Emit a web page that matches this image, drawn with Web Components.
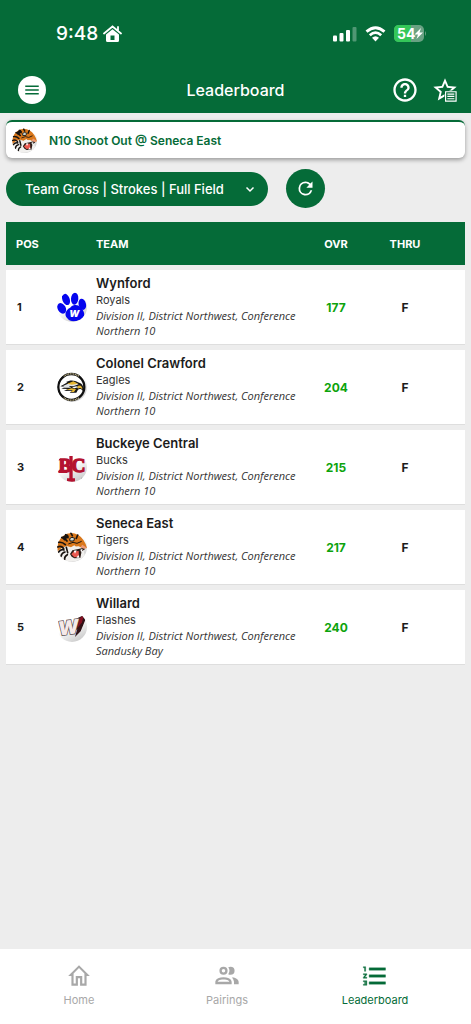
<!DOCTYPE html>
<html lang="en">
<head>
<meta charset="utf-8">
<meta name="viewport" content="width=device-width, initial-scale=1">
<title>Leaderboard</title>
<style>
	:root {
		--brand: #056b38;
		--page: #ededed;
	}

	body {
		margin: 0;
		background: var(--page);
		color: #1c1c1c;
		font-family: Inter, 'Liberation Sans', sans-serif;
	}
</style>
</head>
<body>
<golf-app></golf-app>

<script>
const define = (name, html, setup) => {
	const template = document.createElement('template');
	template.innerHTML = html;

	customElements.define(name, class extends HTMLElement {
		constructor() {
			super();
			this.attachShadow({mode: 'open'}).appendChild(template.content.cloneNode(true));
		}

		connectedCallback() {
			if (setup) {
				setup(this, this.shadowRoot);
			}
		}
	});
};

const TEAMS = [
	{pos: 1, name: 'Wynford', mascot: 'Royals', conference: 'Northern 10', score: 177, logo: 'paw'},
	{pos: 2, name: 'Colonel Crawford', mascot: 'Eagles', conference: 'Northern 10', score: 204, logo: 'eagle'},
	{pos: 3, name: 'Buckeye Central', mascot: 'Bucks', conference: 'Northern 10', score: 215, logo: 'bucks'},
	{pos: 4, name: 'Seneca East', mascot: 'Tigers', conference: 'Northern 10', score: 217, logo: 'tiger'},
	{pos: 5, name: 'Willard', mascot: 'Flashes', conference: 'Sandusky Bay', score: 240, logo: 'flash'}
];

const LOGOS = {
	paw: `
		<g fill="#0505ee">
			<ellipse cx="14" cy="49" rx="12" ry="17" transform="rotate(-30 14 49)"/>
			<ellipse cx="27" cy="22" rx="11" ry="18" transform="rotate(-22 27 22)"/>
			<ellipse cx="53" cy="20" rx="11" ry="18" transform="rotate(4 53 20)"/>
			<ellipse cx="76" cy="37" rx="11" ry="17" transform="rotate(-14 76 37)"/>
			<path d="M50 40C64 36 74 46 80 59C85 72 77 83 65 85C52 90 36 88 31 79C20 68 27 54 38 48C43 45 44 41 50 40Z"/>
		</g>
		<text x="52" y="75" text-anchor="middle" font-size="28" font-weight="900" font-style="italic" fill="#fff">W</text>`,
	eagle: `
		<circle cx="43" cy="45" r="39" fill="#fff" stroke="#101010" stroke-width="7"/>
		<path d="M20 13A39 39 0 0 1 66 13M20 77A39 39 0 0 0 66 77" fill="none" stroke="#d8cc9c" stroke-width="4" stroke-dasharray="3 2"/>
		<path d="M10 43C18 38 25 34 31 32L27 30C39 23 53 24 63 31C74 34 82 42 78 57C73 50 67 50 63 53L58 62L38 62L45 56L21 57L33 51L13 50L25 45Z" fill="#161616"/>
		<path d="M18 42L38 33L56 32L65 37L49 43L35 42L43 47L23 47Z" fill="#e1e3e5"/>
		<path d="M31 35L49 28L63 35L44 38ZM27 54L43 49L57 51L51 60L41 60L47 54ZM60 44C68 36 77 43 76 52C70 46 66 48 63 50Z" fill="#e5b530"/>
		<path d="M45 46L58 43L63 46L52 49Z" fill="#fff"/>`,
	bucks: `
		<path d="M42 12V86M30 84H54M6 58H30" stroke="#b41230" stroke-width="10" fill="none"/>
		<text x="45" y="60" font-family="'Liberation Serif', serif" font-weight="700" font-size="58" text-anchor="middle" fill="#b41230" stroke="#b41230" stroke-width="4">BC</text>
		<path d="M72 79H77" stroke="#777" stroke-width="3"/>`,
	tiger: `
		<path d="M2 60Q-2 30 17 13Q39-5 64 9Q82 20 90 48L80 50L65 43L48 44L35 50L22 50Z" fill="#d9781c"/>
		<path d="M2 58L14 48L29 42L42 46L52 40L60 48L78 50L84 72Q62 93 30 88Q8 80 2 58Z" fill="#f1f0ee"/>
		<g fill="none" stroke="#171310" stroke-width="5" stroke-linecap="round">
			<path d="M14 16Q24 18 30 27M26 8L33 17M42 4L46 11M62 9L58 19M5 31Q16 29 25 38M2 45Q12 40 20 49M5 60Q12 50 21 54M12 73Q14 62 24 60M23 82Q22 73 31 68M32 62L28 46"/>
		</g>
		<path d="M14 16L30 6L36 13L22 26Z" fill="#171310"/>
		<path d="M38 20Q44 12 53 19L50 27L39 27Z" fill="#cdd9d5" stroke="#171310" stroke-width="3"/>
		<path d="M34 36L48 31L60 34L74 28" fill="none" stroke="#171310" stroke-width="3"/>
		<path d="M39 66L46 55L64 51L80 47L84 52L74 58L70 78L52 79L44 74Z" fill="#2c1d18"/>
		<path d="M43 67L51 58L65 57L66 74L52 76Z" fill="#ea5950"/>
		<path d="M50 56L54 65L59 55ZM70 53L73 62L77 50ZM58 77L64 69L68 77Z" fill="#fff"/>
		<path d="M76 38L89 47L80 50L71 45Z" fill="#ec9a7a"/>`,
	flash: `
		<path d="M62 18L83 8L87 19L71 58L54 75L61 50L54 58Z" fill="#301217"/>
		<path d="M66 20L81 8L75 31L61 49Z" fill="#861022"/>
		<text x="34" y="67" text-anchor="middle" font-size="58" font-weight="900" font-style="italic" fill="#f5e9e9" stroke="#55474a" stroke-width="4" paint-order="stroke" transform="rotate(-8 34 45)">W</text>`
};

const ICONS = {
	menu: '<path d="M3 6h18v2H3zM3 11h18v2H3zM3 16h18v2H3z"/>',
	help: '<path d="M11 18h2v-2h-2v2zm1-16C6.48 2 2 6.48 2 12s4.48 10 10 10 10-4.48 10-10S17.52 2 12 2zm0 18c-4.41 0-8-3.59-8-8s3.59-8 8-8 8 3.59 8 8-3.59 8-8 8zm0-14c-2.21 0-4 1.79-4 4h2c0-1.1.9-2 2-2s2 .9 2 2c0 2-3 1.75-3 5h2c0-2.25 3-2.5 3-5 0-2.21-1.79-4-4-4z"/>',
	favorites: '<path d="M22 9.240l-7.190-.620L12 2 9.190 8.630 2 9.240l5.460 4.730L5.820 21 12 17.270 18.180 21l-1.630-7.030L22 9.240zM12 15.400l-3.760 2.270 1-4.280-3.320-2.880 4.380-.380L12 6.100l1.710 4.040 4.380.380-3.320 2.880 1 4.280L12 15.400z"/><path d="M11.500 12.500h11v10h-11z" fill="var(--brand)"/><path d="M12.500 13.500h9v8h-9z" fill="none" stroke="currentColor"/><path d="M14 15h6v1h-6zM14 17h6v1h-6zM14 19h6v1h-6z"/>',
	chevron: '<path d="M5 9l7 7 7-7" fill="none" stroke="currentColor" stroke-width="3"/>',
	refresh: '<path d="M17.650 6.350A7.950 7.950 0 0 0 12 4a8 8 0 1 0 7.730 10h-2.080A6 6 0 1 1 12 6c1.660 0 3.140.69 4.220 1.780L13 11h7V4l-2.350 2.350z"/>',
	home: '<path d="M12 2L2 12h3v9h6v-7h2v7h6v-9h3L12 2zm0 2.700l5 5V19h-2v-7H9v7H7V9.700z"/>',
	pairings: '<path d="M13.070 10.410A5 5 0 0 0 13.070 4.590A3.390 3.390 0 0 1 15 4A3.500 3.500 0 0 1 15 11A3.390 3.390 0 0 1 13.070 10.410M5.500 7.500A3.500 3.500 0 1 1 9 11A3.500 3.500 0 0 1 5.500 7.500M7.500 7.500A1.500 1.500 0 1 0 9 6A1.500 1.500 0 0 0 7.500 7.500M16 17V19H2V17S2 13 9 13 16 17 16 17M14 17C13.860 16.220 12.670 15 9 15S4.070 16.310 4 17M15.950 13A5.320 5.320 0 0 1 18 17V19H22V17S22 13.370 15.940 13Z"/>',
	leaderboard: '<path d="M2 17h2v.5H3v1h1v.5H2v1h3v-4H2v1zm1-9h1V4H2v1h1v3zm-1 3h1.800L2 13.100v.9h3v-1H3.200L5 10.900V10H2v1zm5-6v2h14V5H7zm0 14h14v-2H7v2zm0-6h14v-2H7v2z" stroke="currentColor" stroke-width=".3"/>'
};

define('app-icon', `
	<style>
		:host {
			display: block;
			flex: none;
			width: var(--icon-size, 24px);
			height: var(--icon-size, 24px);
		}

		svg {
			display: block;
			width: 100%;
			height: 100%;
			fill: currentColor;
		}
	</style>
	<svg viewBox="0 0 24 24" aria-hidden="true"></svg>
`, (host, root) => {
	root.querySelector('svg').innerHTML = ICONS[host.getAttribute('name')];
});

define('team-logo', `
	<style>
		:host {
			display: block;
			flex: none;
			width: var(--logo-size, 30px);
			height: var(--logo-size, 30px);
			border-radius: 50%;
			background: linear-gradient(150deg, #fff 45%, #bdbdbd);
			overflow: hidden;
		}

		svg {
			display: block;
			width: 100%;
			height: 100%;
		}
	</style>
	<svg viewBox="0 0 90 90" aria-hidden="true"></svg>
`, (host, root) => {
	root.querySelector('svg').innerHTML = LOGOS[host.getAttribute('name')];
});

define('status-bar', `
	<style>
		:host {
			display: flex;
			justify-content: space-between;
			align-items: center;
			height: 67px;
			padding: 0 44px 0 56px;
		}

		div {
			display: flex;
			align-items: center;
			gap: 5px;
		}

		.right {
			gap: 8px;
		}

		time {
			font-size: 19px;
			font-weight: 500;
		}

		svg {
			display: block;
		}
	</style>
	<div>
		<time>9:48</time>
		<svg width="19" height="18" viewBox="0 0 19 18" fill="currentColor" aria-hidden="true">
			<path d="M1 8.500L9.500 1.500L18 8.500M15 2v4" fill="none" stroke="currentColor" stroke-width="1.800" stroke-linecap="round"/>
			<path d="M9.500 4.200L16 9.500V15.500Q16 17 14.500 17H4.500Q3 17 3 15.500V9.500ZM7.500 10.500V15H11.500V10.500Z" fill-rule="evenodd"/>
		</svg>
	</div>
	<div class="right">
		<svg width="24" height="16" viewBox="0 0 24 16" fill="currentColor" aria-hidden="true">
			<rect y="9.500" width="4" height="6" rx="1"/>
			<rect x="6.500" y="7" width="4" height="8.500" rx="1"/>
			<rect x="13" y="4" width="4" height="11.500" rx="1"/>
			<rect x="19.500" y="1" width="4" height="14.500" rx="1" opacity=".3"/>
		</svg>
		<svg width="21" height="16" viewBox="0 0 21 16" aria-hidden="true">
			<g fill="none" stroke="currentColor" stroke-width="2.800">
				<path d="M1.500 5.600Q10.500-2.200 19.500 5.600M4.800 9.200Q10.500 4 16.200 9.200"/>
			</g>
			<path d="M7 11.800Q10.500 8.700 14 11.800L10.500 15.500Z" fill="currentColor"/>
		</svg>
		<svg width="33" height="17" viewBox="0 0 33 17" aria-hidden="true">
			<rect width="30" height="17" rx="5" fill="#69a283"/>
			<path d="M17 0H5Q0 0 0 5V12Q0 17 5 17H17Z" fill="#34c759"/>
			<path d="M31 6Q33 8.500 31 11Z" fill="#69a283"/>
			<text x="3" y="14" font-size="14" font-weight="700" fill="#fff">54</text>
			<path d="M27 3L20.500 9.500H24L22.500 14L29 7.500H25.500Z" fill="#fff"/>
		</svg>
	</div>
`);

define('app-bar', `
	<style>
		:host {
			display: grid;
			grid-template-columns: 1fr auto 1fr;
			align-items: center;
			height: 46px;
			padding: 0 12px;
		}

		h1 {
			margin: 0;
			font-size: 16px;
			font-weight: 500;
		}

		button {
			display: flex;
			align-items: center;
			justify-content: center;
			padding: 0;
			border: 0;
			background: none;
			color: inherit;
		}

		.menu {
			--icon-size: 18px;
			width: 28px;
			height: 28px;
			margin-left: 6px;
			border-radius: 50%;
			background: #fff;
			color: var(--brand);
		}

		.actions {
			display: flex;
			justify-content: flex-end;
			gap: 12px;
			--icon-size: 28px;
		}
	</style>
	<button class="menu" aria-label="Menu"><app-icon name="menu"></app-icon></button>
	<h1><slot></slot></h1>
	<div class="actions">
		<button aria-label="Help"><app-icon name="help"></app-icon></button>
		<button aria-label="Favorites"><app-icon name="favorites"></app-icon></button>
	</div>
`);

define('event-banner', `
	<style>
		:host {
			display: flex;
			align-items: center;
			gap: 12px;
			box-sizing: border-box;
			height: 38px;
			padding: 0 6px;
			border-top: 2px solid var(--brand);
			border-radius: 6px;
			background: #fff;
			box-shadow: 0 2px 4px rgba(0, 0, 0, .35);
			color: var(--brand);
			font-size: 12px;
			font-weight: 600;
			--logo-size: 25px;
		}
	</style>
	<team-logo name="tiger"></team-logo>
	<slot></slot>
`);

define('board-filter', `
	<style>
		:host {
			display: flex;
			align-items: center;
			gap: 18px;
			color: #fff;
		}

		label {
			display: grid;
			grid-template-columns: 1fr auto;
			align-items: center;
			border-radius: 17px;
			background: var(--brand);
			--icon-size: 12px;
		}

		select {
			grid-area: 1 / 1 / 2 / 3;
			appearance: none;
			width: 262px;
			height: 34px;
			padding: 0 36px 0 19px;
			border: 0;
			border-radius: 17px;
			background: none;
			color: inherit;
			font: 500 13px Inter, 'Liberation Sans', sans-serif;
		}

		app-icon {
			grid-area: 1 / 2;
			pointer-events: none;
		}

		label app-icon {
			margin-right: 12px;
		}

		button {
			display: flex;
			align-items: center;
			justify-content: center;
			width: 39px;
			height: 39px;
			padding: 0;
			border: 0;
			border-radius: 50%;
			background: var(--brand);
			color: inherit;
			--icon-size: 21px;
		}
	</style>
	<label>
		<select aria-label="Leaderboard view">
			<option>Team Gross | Strokes | Full Field</option>
		</select>
		<app-icon name="chevron"></app-icon>
	</label>
	<button aria-label="Refresh"><app-icon name="refresh"></app-icon></button>
`);

define('leader-table', `
	<style>
		:host {
			display: block;
		}

		table {
			width: 100%;
			table-layout: fixed;
			border-spacing: 0 5px;
			font-size: 12px;
		}

		th,
		td {
			padding: 0;
			text-align: center;
			font-weight: 700;
		}

		th {
			height: 43px;
			background: var(--brand);
			color: #fff;
			font-size: 11px;
		}

		td {
			box-sizing: border-box;
			height: 75px;
			border-bottom: 1px solid #dedede;
			background: #fff;
		}

		.pos {
			width: 41px;
			padding-left: 10px;
			text-align: left;
		}

		td.pos {
			padding-left: 11px;
			font-size: 11px;
		}

		.logo {
			width: 39px;
		}

		.team {
			text-align: left;
			font-weight: 400;
		}

		td.team {
			padding-bottom: 2px;
		}

		th.team {
			font-weight: 700;
		}

		.ovr {
			width: 70px;
		}

		td.ovr {
			color: #0ca30c;
		}

		.thru {
			width: 68px;
			padding-right: 26px;
		}

		h2,
		p {
			margin: 0;
		}

		h2 {
			font-size: 13px;
			font-weight: 600;
			line-height: 19px;
		}

		p {
			font-size: 11px;
			line-height: 15px;
			color: #333;
		}

		.division {
			font-family: 'Open Sans', 'Liberation Sans', sans-serif;
			font-style: italic;
		}
	</style>
	<table>
		<thead>
			<tr>
				<th class="pos">POS</th>
				<th class="logo"></th>
				<th class="team">TEAM</th>
				<th class="ovr">OVR</th>
				<th class="thru">THRU</th>
			</tr>
		</thead>
		<tbody></tbody>
	</table>
`, (host, root) => {
	root.querySelector('tbody').innerHTML = TEAMS.map(team => `
		<tr>
			<td class="pos">${team.pos}</td>
			<td class="logo"><team-logo name="${team.logo}"></team-logo></td>
			<td class="team">
				<h2>${team.name}</h2>
				<p>${team.mascot}</p>
				<p class="division">Division II, District Northwest, Conference ${team.conference}</p>
			</td>
			<td class="ovr">${team.score}</td>
			<td class="thru">F</td>
		</tr>
	`).join('');
});

define('nav-item', `
	<style>
		:host {
			display: block;
			flex: 1;
			color: #a8a8a8;
			--icon-size: 28px;
		}

		:host([active]) {
			color: var(--brand);
		}

		a {
			display: flex;
			flex-direction: column;
			align-items: center;
			gap: 2px;
			color: inherit;
			font-size: 11px;
			line-height: 16px;
			text-decoration: none;
		}

		app-icon[name="home"] {
			--icon-size: 26px;
			margin: 1px 0;
		}
	</style>
	<a href="#"><app-icon></app-icon><slot></slot></a>
`, (host, root) => {
	const icon = document.createElement('app-icon');
	icon.setAttribute('name', host.getAttribute('icon'));
	root.querySelector('app-icon').replaceWith(icon);
});

define('golf-app', `
	<style>
		:host {
			display: flex;
			flex-direction: column;
			min-height: 100vh;
		}

		header {
			background: var(--brand);
			color: #fff;
		}

		main {
			flex: 1;
			padding: 7px 6px;
		}

		board-filter {
			margin: 11px 0 9px;
		}

		nav {
			display: flex;
			box-sizing: border-box;
			height: 75px;
			padding: 13px 22px 0 5px;
			background: #fff;
		}
	</style>
	<header>
		<status-bar></status-bar>
		<app-bar>Leaderboard</app-bar>
	</header>
	<main>
		<event-banner>N10 Shoot Out @ Seneca East</event-banner>
		<board-filter></board-filter>
		<leader-table></leader-table>
	</main>
	<nav>
		<nav-item icon="home">Home</nav-item>
		<nav-item icon="pairings">Pairings</nav-item>
		<nav-item icon="leaderboard" active>Leaderboard</nav-item>
	</nav>
`);
</script>
</body>
</html>
